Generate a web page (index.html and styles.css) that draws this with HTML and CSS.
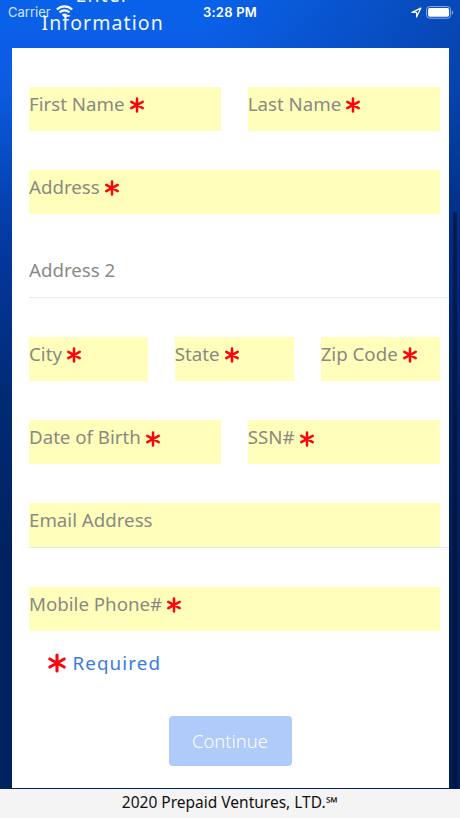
FILE: index.html
```
<!DOCTYPE html>
<html lang="en">
<head>
    <meta charset="UTF-8">
    <meta name="viewport" content="width=device-width, initial-scale=1.0">
    <title>Enter Information</title>
    <link rel="stylesheet" href="styles.css">
</head>
<body>

<svg class="symbols" width="0" height="0">
    <symbol id="asterisk" viewBox="0 0 14 16">
        <path d="M7 1.6V14.4M1.3 4.8L12.7 11.2M12.7 4.8L1.3 11.2" fill="none" stroke="#fb060c" stroke-width="2.5" stroke-linecap="round"/>
    </symbol>
</svg>

<div class="status-bar">
    <div class="carrier">
        <span>Carrier</span>
        <svg class="wifi" width="17" height="13" viewBox="0 0 16 12">
            <path d="M.8 4.1C5 .2 11 .2 15.2 4.1M3.3 6.8c2.7-2.5 6.7-2.5 9.4 0" fill="none" stroke="#fff" stroke-width="2"/>
            <path d="M5.4 9C7 7.6 9 7.6 10.6 9L8 11.7z" fill="#fff"/>
        </svg>
    </div>
    <span class="time">3:28 PM</span>
    <div class="indicators">
        <svg width="11" height="11" viewBox="0 0 11 11">
            <path d="M1 5.4L9.9 1.1 5.6 10V5.4z" fill="none" stroke="#fff" stroke-width="1.2" stroke-linejoin="round"/>
        </svg>
        <svg width="28" height="13" viewBox="0 0 28 13">
            <rect x=".6" y=".6" width="24" height="11.6" rx="3" fill="none" stroke="#8caee6"/>
            <rect x="2.1" y="2.1" width="21" height="8.6" rx="1.6" fill="#fff"/>
            <path d="M26 4.4c1.5.7 1.5 3.3 0 4z" fill="#8caee6"/>
        </svg>
    </div>
</div>

<header>
    <h1>Enter<br>Information</h1>
</header>

<form class="card">
    <div class="row">
        <div class="field required">First Name <svg><use href="#asterisk"/></svg></div>
        <div class="field required">Last Name <svg><use href="#asterisk"/></svg></div>
    </div>
    <div class="row">
        <div class="field required">Address <svg><use href="#asterisk"/></svg></div>
    </div>
    <div class="row underlined">
        <div class="field">Address 2</div>
    </div>
    <div class="row">
        <div class="field required">City <svg><use href="#asterisk"/></svg></div>
        <div class="field required">State <svg><use href="#asterisk"/></svg></div>
        <div class="field required">Zip Code <svg><use href="#asterisk"/></svg></div>
    </div>
    <div class="row">
        <div class="field required">Date of Birth <svg><use href="#asterisk"/></svg></div>
        <div class="field required">SSN# <svg><use href="#asterisk"/></svg></div>
    </div>
    <div class="row underlined">
        <div class="field required">Email Address</div>
    </div>
    <div class="row">
        <div class="field required">Mobile Phone# <svg><use href="#asterisk"/></svg></div>
    </div>
    <p class="legend"><svg><use href="#asterisk"/></svg> Required</p>
    <button type="button" class="btn" disabled>Continue</button>
</form>

<footer>2020 Prepaid Ventures, LTD.<span class="mark">℠</span></footer>

<div class="scrollbar"></div>

</body>
</html>
```

FILE: styles.css
```
* {
    box-sizing: border-box;
}
body {
    font-family: "Noto Sans", sans-serif;
    margin: 0;
    height: 818px;
    display: flex;
    flex-direction: column;
    overflow: hidden;
    background: linear-gradient(100deg, rgba(0, 25, 85, 0) 35%, rgba(0, 25, 85, 0.55) 100%),
        linear-gradient(#0a62ea 0, #0b5be0 90px, #0339a0 240px, #012a74 400px, #00235f 560px, #00235f 100%);
}
.symbols {
    position: absolute;
}
.status-bar {
    position: absolute;
    top: 0;
    left: 0;
    width: 100%;
    height: 24px;
    padding: 0 6px 0 8px;
    display: grid;
    grid-template-columns: 1fr auto 1fr;
    align-items: center;
    color: #fff;
    font-family: Inter, sans-serif;
    font-size: 13px;
}
.carrier, .indicators {
    display: flex;
    align-items: center;
    gap: 5px;
}
.carrier {
    color: #d3e4ff;
}
.wifi {
    margin-top: -1px;
}
.indicators {
    justify-content: flex-end;
    gap: 4px;
}
.time {
    position: relative;
    left: -1px;
    font-weight: 600;
    letter-spacing: 0.2px;
}
header {
    height: 48px;
    flex: none;
    padding: 0 0 11px 41.5px;
    display: flex;
    align-items: flex-end;
}
h1 {
    margin: 0;
    color: #f1f7ff;
    font-size: 19.5px;
    font-weight: 400;
    line-height: 28px;
    letter-spacing: 1.1px;
    text-align: center;
}
.card {
    height: 740px;
    flex: none;
    margin: 0 11.5px;
    padding: 38.5px 8.5px 0 17.5px;
    background-color: #fff;
    display: flex;
    flex-direction: column;
}
.row {
    height: 44.4px;
    flex: none;
    margin-bottom: 39px;
    display: flex;
    gap: 26.5px;
}
.row.underlined {
    margin-right: -8.5px;
    padding-right: 8.5px;
    border-bottom: 1px solid #e9e9ec;
}
.field {
    flex: 1 1 0;
    display: flex;
    gap: 5px;
    color: #8a8983;
    font-size: 18.7px;
    line-height: 33.5px;
    white-space: nowrap;
}
.field svg {
    width: 14px;
    height: 16px;
    margin-top: 10.5px;
}
.required {
    background-color: #ffffbb;
}
.legend {
    margin: -20px 0 0 19px;
    display: flex;
    align-items: center;
    gap: 6.5px;
    color: #3b7be0;
    font-size: 18.8px;
    line-height: 26px;
    letter-spacing: 1.1px;
}
.legend svg {
    width: 18px;
    height: 20px;
}
.btn {
    width: 123px;
    height: 50px;
    margin: 40px 0 0 139.5px;
    padding-bottom: 3px;
    border: 0;
    border-radius: 4px;
    background-color: #afcbfa;
    color: #fff;
    font-family: inherit;
    font-size: 18.4px;
    font-weight: 300;
}
footer {
    height: 29px;
    margin-top: 1px;
    flex: none;
    background-color: #f4f4f5;
    color: #111;
    font-size: 15.5px;
    line-height: 27px;
    text-align: center;
}
.mark {
    font-size: 15.5px;
}
.scrollbar {
    position: absolute;
    top: 212px;
    right: 3px;
    width: 4px;
    height: 577px;
    border-radius: 2px;
    background-color: rgba(0, 15, 50, 0.6);
}
```
